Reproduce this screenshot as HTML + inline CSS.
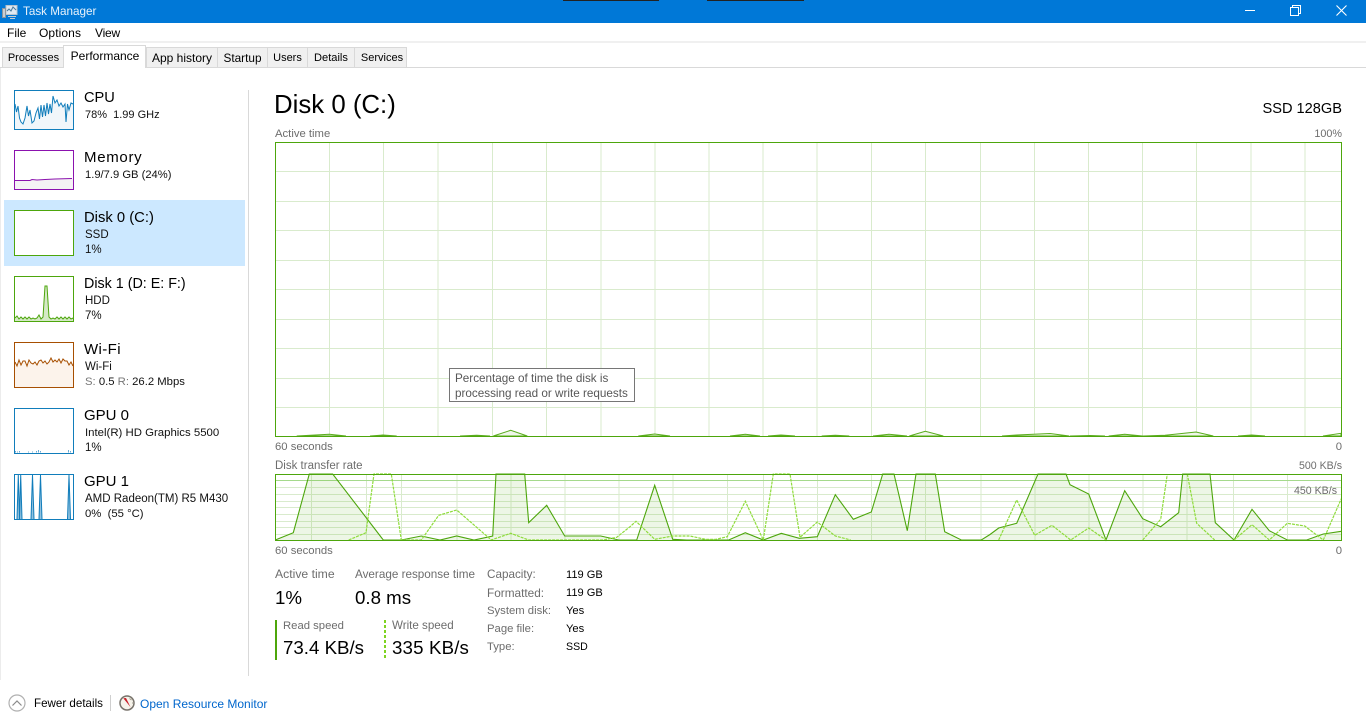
<!DOCTYPE html>
<html><head><meta charset="utf-8"><title>Task Manager</title>
<style>
html,body{margin:0;padding:0;background:#fff}
body{position:relative;width:1366px;height:728px;overflow:hidden;font-family:"Liberation Sans",sans-serif;font-size:12px;color:#000}
.b{position:absolute}
.t{position:absolute;white-space:nowrap;line-height:16px;height:16px;margin-top:1px}
.n{margin-top:0}
.r{text-align:right;width:120px}
.g{color:#6d6d6d;font-size:11.3px}
.h{font-size:15px}
.s{font-size:11.5px;color:#111}
.v{font-size:18.7px;line-height:24px;height:24px}
.tab{position:absolute;top:47px;height:19px;background:#f0f0f0;border:1px solid #d9d9d9;box-sizing:content-box;text-align:center;line-height:20px;font-size:11.3px;white-space:nowrap}
svg{position:absolute;left:0;top:0}
</style></head><body>
<div class="b" style="left:0;top:0;width:1366px;height:23px;background:#0078d7"></div>
<div class="b" style="left:563px;top:0;width:96px;height:1px;background:#222"></div>
<div class="b" style="left:707px;top:0;width:97px;height:1px;background:#222"></div>
<span class="t n" style="left:23px;top:4px;color:#e8f2fb;font-size:11.7px">Task Manager</span>
<span class="t n" style="left:7px;top:25px">File</span>
<span class="t n" style="left:39px;top:25px;letter-spacing:.1px">Options</span>
<span class="t n" style="left:95px;top:25px;letter-spacing:-.2px">View</span>
<div class="b" style="left:0;top:41px;width:1366px;height:2px;background:#f0f0f0"></div>
<div class="b" style="left:0;top:67px;width:1366px;height:1px;background:#d9d9d9"></div>
<div class="b" style="left:0;top:68px;width:1px;height:612px;background:#ececec"></div>
<div class="tab" style="left:2px;width:60px;font-size:11px;text-indent:1px">Processes</div>
<div class="tab" style="left:146px;width:70px;font-size:12px">App history</div>
<div class="tab" style="left:217px;width:49px;font-size:11.8px">Startup</div>
<div class="tab" style="left:267px;width:39px;font-size:11px">Users</div>
<div class="tab" style="left:307px;width:46px;font-size:11.1px">Details</div>
<div class="tab" style="left:354px;width:51px;font-size:11px;text-indent:3px">Services</div>
<div class="tab" style="left:63px;top:45px;width:81px;height:22px;background:#fff;border-bottom:0;font-size:12px;text-indent:1px">Performance</div>
<div class="b" style="left:4px;top:200px;width:241px;height:66px;background:#cce8ff"></div>
<div class="b" style="left:248px;top:90px;width:1px;height:586px;background:#d9d9d9"></div>

<svg width="1366" height="728" viewBox="0 0 1366 728" fill="none">
<!-- title icon -->
<rect x="6" y="5.5" width="11" height="9" fill="#dfe9f2" stroke="#b8c4ce"/>
<path d="M7 11l2-2 2 2 2-4 3 3" stroke="#4a7a9c"/>
<rect x="2.5" y="8.5" width="3" height="9" fill="#c9ced3" stroke="#8d959c"/>
<path d="M8 16.5h8M10 18.5h5" stroke="#c3ccd3"/>
<!-- window buttons -->
<path d="M1245 10.5h10" stroke="#fff"/>
<path d="M1290.5 7.5h8v8h-8zM1292.5 7.5v-2h8v8h-2" stroke="#fff"/>
<path d="M1336.5 5.5l10 10M1346.5 5.5l-10 10" stroke="#fff" stroke-width="1.1"/>

<!-- thumbnails -->
<rect x="14.5" y="90.5" width="59" height="39" fill="#fff" stroke="#117dbb"/>
<path d="M15 129V104L16.5 112 18 106 19.5 118 21 122 23 124 25 118 27 106 28.5 116 30 110 32 123 34 121 36 113 38 108 39.5 119 41 105 42.5 117 44 105 45.5 116 47 103 48.5 114 50 104 51.5 113 53 96 55 103 57 100 59 106 61 103 63 107 65 104 66 122 67.5 104 69 110 71 103 73 104V129Z" fill="#f1f6fa"/>
<path d="M15 104L16.5 112 18 106 19.5 118 21 122 23 124 25 118 27 106 28.5 116 30 110 32 123 34 121 36 113 38 108 39.5 119 41 105 42.5 117 44 105 45.5 116 47 103 48.5 114 50 104 51.5 113 53 96 55 103 57 100 59 106 61 103 63 107 65 104 66 122 67.5 104 69 110 71 103 73 104" stroke="#117dbb"/>

<rect x="14.5" y="150.5" width="59" height="39" fill="#fff" stroke="#8b12ae"/>
<path d="M15 189V180.5H30L32 179.5 37 180 45 179.5 55 179 72 178.5 73 178.5V189Z" fill="#f4f2f4"/>
<path d="M15 180.5H30L32 179.5 37 180 45 179.5 55 179 72 178.5" stroke="#8b12ae"/>

<rect x="14.5" y="210.5" width="59" height="45" fill="#fff" stroke="#4da60c"/>

<rect x="14.5" y="276.5" width="59" height="45" fill="#fff" stroke="#4da60c"/>
<path d="M15 321V318L17 316 19 319 21 317 23 319 25 317 27 319 29 317 31 319 33 318 35 319 37 318 39 315 41 319 43 317 45 286 47 286 49 317 51 319 53 318 55 319 57 317 59 319 61 317 63 319 65 317 67 319 69 317 71 319 73 318V321Z" fill="#d5e9c6"/>
<path d="M15 318L17 316 19 319 21 317 23 319 25 317 27 319 29 317 31 319 33 318 35 319 37 318 39 315 41 319 43 317 45 286 47 286 49 317 51 319 53 318 55 319 57 317 59 319 61 317 63 319 65 317 67 319 69 317 71 319 73 318" stroke="#4da60c"/>

<rect x="14.5" y="342.5" width="59" height="45" fill="#fff" stroke="#a74f01"/>
<path d="M15 387V362L17 366 19 360 21 365 23 361 25 361 27 366 29 360 31 363 33 364 35 362 37 365 39 361 41 360 43 363 45 361 47 364 49 362 51 358 53 362 55 360 57 362 59 359 61 363 63 359 65 361 67 361 69 365 71 362 73 366V387Z" fill="#fcf3eb"/>
<path d="M15 362L17 366 19 360 21 365 23 361 25 361 27 366 29 360 31 363 33 364 35 362 37 365 39 361 41 360 43 363 45 361 47 364 49 362 51 358 53 362 55 360 57 362 59 359 61 363 63 359 65 361 67 361 69 365 71 362 73 366" stroke="#a74f01"/>

<rect x="14.5" y="408.5" width="59" height="45" fill="#fff" stroke="#117dbb"/>
<path d="M15.5 452.5V451M17.5 452.5V451.5M19.5 452.5V451M28.5 452.5V451.5M32.5 452.5V451.5M36.5 452.5V451M38.5 452.5V450M40.5 452.5V451M68.5 452.5V450M70.5 452.5V451" stroke="#6aa9d2"/>

<rect x="14.5" y="474.5" width="59" height="45" fill="#fff" stroke="#117dbb"/>
<path d="M17 519L18.3 475 19.6 519ZM19.5 519L20.7 475 22 519ZM31 519L32.5 475 34 519ZM39 519L40.5 475 42 519ZM67.5 519L69 475 70.5 519Z" fill="#8fc0de"/>
<path d="M17 519L18.3 475 19.6 519M19.5 519L20.7 475 22 519M31 519L32.5 475 34 519M39 519L40.5 475 42 519M67.5 519L69 475 70.5 519" stroke="#117dbb"/>

<!-- main chart -->
<g stroke="#d9ebcd">
<path d="M329.5 143V436M383.5 143V436M438 143V436M492.5 143V436M546.5 143V436M601 143V436M655 143V436M709 143V436M763 143V436M817 143V436M871.5 143V436M925.5 143V436M980.5 143V436M1034.5 143V436M1088.5 143V436M1142.5 143V436M1196.5 143V436M1251 143V436M1305 143V436"/>
<path d="M276 171.5H1341M276 201.5H1341M276 230.5H1341M276 260.5H1341M276 289.5H1341M276 319.5H1341M276 348.5H1341M276 378.5H1341M276 407.5H1341"/>
</g>
<path d="M296.7 436L329.3 434.3 346 436ZM370 436L383 435 396.7 436ZM460 436L476.7 435.3 490 436ZM493.3 436L510.7 430.3 527.3 436ZM638.3 436L654.7 434 670 436ZM730 436L745.3 434.3 760 436ZM768 436L781 435 795 436ZM821.7 436L835.3 435.3 849.3 436ZM873 436L889 434.3 907 436ZM909.3 436L925.3 431.3 943.3 436ZM1002 436L1016.7 435 1050 433.5 1069.3 436ZM1070 436L1090 435.5 1105 436ZM1108.7 436L1124.7 434.3 1142.7 436ZM1142.7 436L1165 435.3 1196 432 1213.3 436ZM1238 436L1251.7 435 1265 436ZM1323 436L1341 433.3V436Z" fill="#eef6e8" stroke="#5aac1d"/>
<rect x="275.5" y="142.5" width="1066" height="294" stroke="#4da60c"/>

<!-- transfer chart -->
<g stroke="#d9ebcd">
<path d="M276 487.5H1341M276 494.5H1341M276 501.5H1341M276 507.5H1341M276 514.5H1341M276 521.5H1341M276 527.5H1341M276 534.5H1341"/>
<path d="M311.5 475V540M366.5 475V540M401.5 475V540M457 475V540M511 475V540M565 475V540M619 475V540M673 475V540M727.5 475V540M763.5 475V540M817.5 475V540M871.5 475V540M925.5 475V540M981 475V540M1035 475V540M1089 475V540M1143 475V540M1187 475V540M1233.5 475V540M1287.5 475V540"/>
</g>
<path d="M276 480.5H1341" stroke="#a5d98c"/>
<path d="M275.3 540L293.3 532.7 309.3 474 332.7 474 383.3 540 401.3 540 421.3 536 440 540 456.7 536 474 540 492.7 536 496 474 524.7 474 528.7 522.7 546.7 505.3 564.7 536 600.7 536 618.7 540 636.7 540 654.7 485.3 672.7 539.3 686.7 540 728.7 540 745.3 532.7 763.3 540 781.3 533.3 799.3 538.3 817.3 536.7 835.3 494.7 853.3 519.3 871.3 512 882.7 474 894 474 907.3 530.7 916 474 935.3 474 944.7 531.7 961.3 540 981.3 540 990 534.5 998.7 528 1016.7 523.3 1038 474 1066 474 1070 484.7 1088.7 494 1106 540 1124.7 490.7 1142.7 518.7 1160.7 526.7 1178.7 512.7 1182.7 474 1210 474 1215.3 522.7 1234 540 1252 509.3 1269.3 530.7 1287.3 540 1306.7 540 1323.3 534 1341.3 531.3V540Z" fill="#5aac1d" fill-opacity=".11"/>
<path d="M275.3 540L293.3 532.7 309.3 474 332.7 474 383.3 540 401.3 540 421.3 536 440 540 456.7 536 474 540 492.7 536 496 474 524.7 474 528.7 522.7 546.7 505.3 564.7 536 600.7 536 618.7 540 636.7 540 654.7 485.3 672.7 539.3 686.7 540 728.7 540 745.3 532.7 763.3 540 781.3 533.3 799.3 538.3 817.3 536.7 835.3 494.7 853.3 519.3 871.3 512 882.7 474 894 474 907.3 530.7 916 474 935.3 474 944.7 531.7 961.3 540 981.3 540 990 534.5 998.7 528 1016.7 523.3 1038 474 1066 474 1070 484.7 1088.7 494 1106 540 1124.7 490.7 1142.7 518.7 1160.7 526.7 1178.7 512.7 1182.7 474 1210 474 1215.3 522.7 1234 540 1252 509.3 1269.3 530.7 1287.3 540 1306.7 540 1323.3 534 1341.3 531.3" stroke="#4da60c" stroke-width="1.1"/>
<path d="M348.7 540L366 532.7 374 474 391.3 474 401.3 540 421.3 540 438.7 515.3 456.7 510 491.3 540 510.7 533.3 528.7 540 603.3 540 616.7 537.3 630 526.7 636 521.3 654.7 539.3 672.7 536 690 536 705.3 539.3 716 539.3 727.3 536.7 745.3 501.3 763.3 540 773.3 474 790 474 800 537.3 817.3 522 835.3 536 850.7 540M998.7 540L1016.7 500 1034.7 535.3 1052 525.3 1070.7 540 1088.7 528 1106 540M1142.7 540L1160.7 519.3 1167.3 474M1187.3 474L1196.7 523.3 1214.7 540M1234 540L1252 524.7 1269.3 540 1287.3 523.3 1304.7 526 1323.3 540 1341.3 498.7" stroke="#8fdc3c" stroke-width="1.2" stroke-dasharray="3 1"/>
<rect x="275.5" y="474.5" width="1066" height="66" stroke="#4da60c"/>

<!-- read/write bars -->
<path d="M276 620V660" stroke="#4da60c" stroke-width="2"/>
<path d="M385 620V660" stroke="#7fd321" stroke-width="2" stroke-dasharray="3 2"/>

<!-- footer icons -->
<circle cx="17" cy="703" r="8" fill="#fff" stroke="#b0b0b0" stroke-width="1.2"/>
<path d="M12.5 705.5L17 701 21.5 705.5" stroke="#8a8a8a" stroke-width="1.2"/>
<path d="M110.5 695V711" stroke="#cfcfcf"/>
<circle cx="127" cy="703" r="7" fill="#f6f3ea" stroke="#77726a" stroke-width="1.5"/>
<path d="M123.3 698.3L126 698 130.6 707.2Z" fill="#c8202a"/>
<path d="M129.5 698.5l2 1.5M132 703h1" stroke="#a09a8c"/>
</svg>

<span class="t h" style="left:84px;top:89px;font-size:14.6px">CPU</span>
<span class="t s" style="left:85px;top:106px;font-size:11px">78%&nbsp; 1.99 GHz</span>
<span class="t h" style="left:84px;top:149px;letter-spacing:.7px">Memory</span>
<span class="t s" style="left:85px;top:166px;font-size:11.2px">1.9/7.9 GB (24%)</span>
<span class="t h" style="left:84px;top:209px;font-size:14.8px">Disk 0 (C:)</span>
<span class="t s" style="left:85px;top:226px">SSD</span>
<span class="t s" style="left:85px;top:241px">1%</span>
<span class="t h" style="left:84px;top:275px;font-size:14.3px">Disk 1 (D: E: F:)</span>
<span class="t s" style="left:85px;top:292px">HDD</span>
<span class="t s" style="left:85px;top:307px">7%</span>
<span class="t h" style="left:84px;top:341px;letter-spacing:.4px">Wi-Fi</span>
<span class="t s" style="left:85px;top:358px">Wi-Fi</span>
<span class="t s" style="left:85px;top:373px;font-size:11.3px"><span style="color:#777">S:</span> 0.5 <span style="color:#777">R:</span> 26.2 Mbps</span>
<span class="t h" style="left:84px;top:407px">GPU 0</span>
<span class="t s" style="left:85px;top:424px;font-size:11.4px">Intel(R) HD Graphics 5500</span>
<span class="t s" style="left:85px;top:439px">1%</span>
<span class="t h" style="left:84px;top:473px">GPU 1</span>
<span class="t s" style="left:85px;top:490px">AMD Radeon(TM) R5 M430</span>
<span class="t s" style="left:85px;top:505px;font-size:11.3px">0%&nbsp; (55 °C)</span>

<span class="t n" style="left:274px;top:89px;font-size:25.8px;line-height:32px;height:32px">Disk 0 (C:)</span>
<span class="t r" style="left:1222px;top:100px;font-size:14.6px">SSD 128GB</span>
<span class="t g" style="left:275px;top:125px">Active time</span>
<span class="t g r" style="left:1222px;top:125px;font-size:10.8px">100%</span>
<span class="t g" style="left:275px;top:438px">60 seconds</span>
<span class="t g r" style="left:1222px;top:438px">0</span>
<span class="t g" style="left:275px;top:457px;font-size:11.5px">Disk transfer rate</span>
<span class="t g r" style="left:1222px;top:457px;font-size:10.6px">500 KB/s</span>
<span class="t g r" style="left:1217px;top:482px;font-size:10.6px">450 KB/s</span>
<span class="t g" style="left:275px;top:542px">60 seconds</span>
<span class="t g r" style="left:1222px;top:542px">0</span>

<div class="b" style="left:449px;top:368px;width:186px;height:34px;box-sizing:border-box;border:1px solid #767676;background:#fff"></div>
<span class="t" style="left:455px;top:370px;color:#575757;font-size:11.7px">Percentage of time the disk is</span>
<span class="t" style="left:455px;top:385px;color:#575757;font-size:11.7px">processing read or write requests</span>

<span class="t g" style="left:275px;top:565px;font-size:12.2px">Active time</span>
<span class="t g" style="left:355px;top:566px;font-size:11.7px">Average response time</span>
<span class="t v" style="left:275px;top:585px">1%</span>
<span class="t v" style="left:355px;top:585px">0.8 ms</span>
<span class="t g" style="left:283px;top:617px">Read speed</span>
<span class="t g" style="left:392px;top:617px;font-size:11.6px">Write speed</span>
<span class="t v" style="left:283px;top:635px">73.4 KB/s</span>
<span class="t v" style="left:392px;top:635px;letter-spacing:.15px">335 KB/s</span>
<span class="t g" style="left:487px;top:566px;font-size:11.7px">Capacity:</span>
<span class="t g" style="left:487px;top:584px;font-size:11.8px">Formatted:</span>
<span class="t g" style="left:487px;top:602px">System disk:</span>
<span class="t g" style="left:487px;top:620px">Page file:</span>
<span class="t g" style="left:487px;top:638px">Type:</span>
<span class="t s" style="left:566px;top:566px;color:#000;font-size:11.1px">119 GB</span>
<span class="t s" style="left:566px;top:584px;color:#000;font-size:11.1px">119 GB</span>
<span class="t s" style="left:566px;top:602px;color:#000;font-size:11.2px">Yes</span>
<span class="t s" style="left:566px;top:620px;color:#000;font-size:11.2px">Yes</span>
<span class="t s" style="left:566px;top:638px;color:#000;font-size:10.6px">SSD</span>

<span class="t n" style="left:34px;top:696px;font-size:11.6px">Fewer details</span>
<span class="t n" style="left:140px;top:696px;color:#0066cc">Open Resource Monitor</span>
</body></html>
